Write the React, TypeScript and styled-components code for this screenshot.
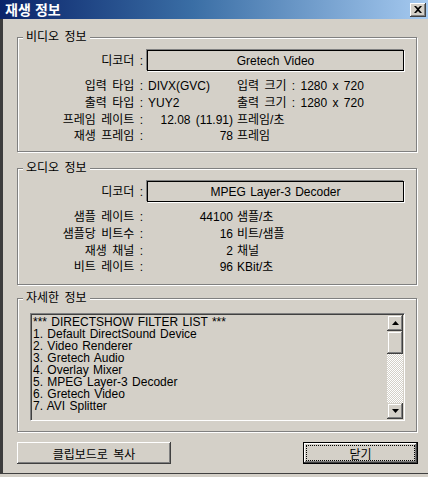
import React from "react";
import styled, { createGlobalStyle } from "styled-components";

const Global = createGlobalStyle`
  html, body { margin: 0; padding: 0; background: #d4d0c8; }
  body {
    width: 428px; height: 477px; overflow: hidden;
    font-family: "Liberation Sans", "Noto Sans CJK KR", sans-serif;
    font-size: 12px; color: #000;
  }
  #root { width: 428px; height: 477px; }
  * { box-sizing: border-box; }
`;

const Window = styled.div`
  width: 428px;
  height: 474px;
  display: flex;
  flex-direction: column;
  background: #d4d0c8;
  border-bottom: 1px solid #404040;
`;

const TitleBar = styled.div`
  height: 19px;
  flex: none;
  display: flex;
  align-items: center;
  justify-content: space-between;
  padding: 0 2px 0 5px;
  background: linear-gradient(to right, #0a246a 0%, #3a6ea5 45%, #a6caf0 100%);
`;

const Title = styled.span`
  color: #fff;
  font-weight: bold;
  font-size: 14px;
  line-height: 19px;
  font-family: "Noto Sans CJK KR", sans-serif;
  word-spacing: 1px;
`;

const CloseButton = styled.div`
  width: 16px;
  height: 14px;
  background: #d4d0c8;
  box-shadow: inset -1px -1px #404040, inset 1px 1px #fff, inset -2px -2px #808080;
  display: flex;
  align-items: center;
  justify-content: center;
  padding-bottom: 1px;
`;

const Body = styled.div`
  flex: 1;
  display: flex;
  flex-direction: column;
  border-left: 3px solid #3c3c3c;
  padding: 18px 11px 0 14px;
`;

const Group = styled.section<{ $h: number; $mt: number }>`
  height: ${(p) => p.$h}px;
  margin-top: ${(p) => p.$mt}px;
  flex: none;
  border: 1px solid #808080;
  box-shadow: 1px 1px 0 #fff, inset 1px 1px 0 #fff;
  display: flex;
  flex-direction: column;
`;

const GroupLabel = styled.div`
  align-self: flex-start;
  margin: -8px 0 0 5px;
  padding: 0 3px;
  height: 14px;
  line-height: 14px;
  background: #d4d0c8;
  white-space: nowrap;
  word-spacing: 2px;
`;

const Grid = styled.div<{ $mt: number; $row: number }>`
  display: grid;
  grid-template-columns: 125px 86px 1fr;
  grid-auto-rows: ${(p) => p.$row}px;
  column-gap: 4px;
  margin-top: ${(p) => p.$mt}px;
  align-items: center;
`;

const Label = styled.div`
  text-align: right;
  white-space: nowrap;
  word-spacing: 2px;
  line-height: 14px;
`;

const Value = styled.div<{ $align: "left" | "right" }>`
  text-align: ${(p) => p.$align};
  padding-left: 1px;
  white-space: nowrap;
  word-spacing: 2px;
  line-height: 14px;
`;

const Extra = styled.div`
  white-space: nowrap;
  word-spacing: 2px;
  line-height: 14px;
`;

const DecoderBox = styled.div`
  grid-column: 2 / 4;
  width: 257px;
  height: 21px;
  border: 1px solid #000;
  box-shadow: 1px 1px 0 #fff, -1px -1px 0 #808080;
  display: flex;
  align-items: center;
  justify-content: center;
  white-space: nowrap;
  word-spacing: 1px;
`;

const ListBox = styled.div`
  margin: 8px 11px 0 12px;
  height: 108px;
  display: flex;
  border: 1px solid;
  border-color: #808080 #fff #fff #808080;
  box-shadow: inset 1px 1px #404040, inset -1px -1px #d4d0c8;
  padding: 1px;
  background: #d4d0c8;
`;

const ListText = styled.div`
  flex: 1;
  padding: 1px 0 0 1px;
  line-height: 12px;
  white-space: pre;
  overflow: hidden;
  word-spacing: 1px;
`;

const ScrollBar = styled.div`
  width: 16px;
  flex: none;
  display: flex;
  flex-direction: column;
`;

const ScrollButton = styled.div<{ $h: number }>`
  height: ${(p) => p.$h}px;
  flex: none;
  background: #d4d0c8;
  box-shadow: inset -1px -1px #404040, inset 1px 1px #d4d0c8, inset -2px -2px #808080, inset 2px 2px #fff;
  display: flex;
  align-items: center;
  justify-content: center;
`;

const Track = styled.div`
  flex: 1;
  background: repeating-conic-gradient(#ffffff 0 25%, #d4d0c8 0 50%) 0 0 / 2px 2px;
`;

const ButtonRow = styled.div`
  margin-top: 10px;
  height: 22px;
  display: flex;
  justify-content: space-between;
`;

const Button = styled.div<{ $w: number; $default?: boolean }>`
  width: ${(p) => p.$w}px;
  height: 22px;
  margin-right: ${(p) => (p.$default ? -1 : 0)}px;
  background: #d4d0c8;
  border: ${(p) => (p.$default ? "1px solid #000" : "none")};
  box-shadow: inset -1px -1px #404040, inset 1px 1px #fff, inset -2px -2px #808080;
  outline: ${(p) => (p.$default ? "1px dotted #000" : "none")};
  outline-offset: -4px;
  display: flex;
  align-items: center;
  justify-content: center;
  word-spacing: 2px;
  white-space: nowrap;
`;

const Arrow = ({ up }: { up: boolean }) => (
  <svg width="7" height="4" viewBox="0 0 7 4">
    <polygon points={up ? "3.5,0 7,4 0,4" : "0,0 7,0 3.5,4"} fill="#000" />
  </svg>
);

const CloseGlyph = () => (
  <svg width="8" height="7" viewBox="0 0 8 7">
    <path d="M0 0h2l2 2 2-2h2L5 3.5 8 7H6L4 5 2 7H0l3-3.5z" fill="#000" />
  </svg>
);

type Row = { label: string; value: string; align: "left" | "right"; extra: string };

const videoRows: Row[] = [
  { label: "입력 타입 :", value: "DIVX(GVC)", align: "left", extra: "입력 크기 : 1280 x 720" },
  { label: "출력 타입 :", value: "YUY2", align: "left", extra: "출력 크기 : 1280 x 720" },
  { label: "프레임 레이트 :", value: "12.08 (11.91)", align: "right", extra: "프레임/초" },
  { label: "재생 프레임 :", value: "78", align: "right", extra: "프레임" },
];

const audioRows: Row[] = [
  { label: "샘플 레이트 :", value: "44100", align: "right", extra: "샘플/초" },
  { label: "샘플당 비트수 :", value: "16", align: "right", extra: "비트/샘플" },
  { label: "재생 채널 :", value: "2", align: "right", extra: "채널" },
  { label: "비트 레이트 :", value: "96", align: "right", extra: "KBit/초" },
];

const filterLines = [
  "*** DIRECTSHOW FILTER LIST ***",
  "1. Default DirectSound Device",
  "2. Video Renderer",
  "3. Gretech Audio",
  "4. Overlay Mixer",
  "5. MPEG Layer-3 Decoder",
  "6. Gretech Video",
  "7. AVI Splitter",
];

const InfoGroup = ({
  title,
  decoder,
  rows,
  h,
  mt,
}: {
  title: string;
  decoder: string;
  rows: Row[];
  h: number;
  mt: number;
}) => (
  <Group $h={h} $mt={mt}>
    <GroupLabel>{title}</GroupLabel>
    <Grid $mt={6} $row={21}>
      <Label>디코더 :</Label>
      <DecoderBox>{decoder}</DecoderBox>
    </Grid>
    <Grid $mt={7} $row={16.67}>
      {rows.map((r) => (
        <React.Fragment key={r.label}>
          <Label>{r.label}</Label>
          <Value $align={r.align}>{r.value}</Value>
          <Extra>{r.extra}</Extra>
        </React.Fragment>
      ))}
    </Grid>
  </Group>
);

export default function App() {
  return (
    <>
      <Global />
      <Window>
        <TitleBar>
          <Title>재생 정보</Title>
          <CloseButton>
            <CloseGlyph />
          </CloseButton>
        </TitleBar>
        <Body>
          <InfoGroup title="비디오 정보" decoder="Gretech Video" rows={videoRows} h={115} mt={0} />
          <InfoGroup title="오디오 정보" decoder="MPEG Layer-3 Decoder" rows={audioRows} h={117} mt={16} />
          <Group $h={134} $mt={13}>
            <GroupLabel>자세한 정보</GroupLabel>
            <ListBox>
              <ListText>{filterLines.join("\n")}</ListText>
              <ScrollBar>
                <ScrollButton $h={16}>
                  <Arrow up />
                </ScrollButton>
                <ScrollButton $h={23} />
                <Track />
                <ScrollButton $h={16}>
                  <Arrow up={false} />
                </ScrollButton>
              </ScrollBar>
            </ListBox>
          </Group>
          <ButtonRow>
            <Button $w={154}>클립보드로 복사</Button>
            <Button $w={115} $default>
              닫기
            </Button>
          </ButtonRow>
        </Body>
      </Window>
    </>
  );
}
